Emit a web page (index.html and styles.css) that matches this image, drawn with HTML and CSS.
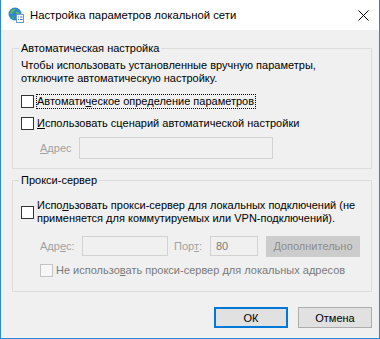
FILE: index.html
```html
<!DOCTYPE html>
<html lang="ru">

<head>
    <meta charset="UTF-8">
    <title>Настройка параметров локальной сети</title>
    <link rel="stylesheet" href="styles.css">
</head>

<body>
    <div class="window">
        <!-- Заголовок окна -->
        <div class="titlebar">
            <svg class="app-icon" viewBox="0 0 16 16" width="16" height="16">
                <circle cx="7" cy="7" r="6.5" fill="#2f86d6" />
                <path d="M2.5 4.5 C4 2 6 1.5 7.5 2.5 C7 4 5.5 4 5 5.5 C4.5 7 3 7.5 2.2 6.5 Z" fill="#5cb85c" />
                <path d="M8 5 C9.5 4.5 11.5 5.5 12.5 7 C12 8.5 10 9 9 8 C8.5 7 7.5 6 8 5 Z" fill="#5cb85c" />
                <path d="M4 9.5 C5 9 6.5 10 6 11.5 C5.5 12.5 4.5 12 4 11 Z" fill="#4caf50" />
                <rect x="8.5" y="7.5" width="7" height="8" fill="#fff" stroke="#6c98c8" />
                <rect x="10" y="9.5" width="1" height="1" fill="#3a78c0" />
                <rect x="12" y="9.5" width="2.5" height="1" fill="#3a78c0" />
                <rect x="10" y="12" width="1" height="1" fill="#3a78c0" />
                <rect x="12" y="12" width="2.5" height="1" fill="#3a78c0" />
            </svg>
            <span class="title">Настройка параметров локальной сети</span>
            <svg class="close" viewBox="0 0 11 11" width="11" height="11">
                <path d="M0.5 0.5 L10.5 10.5 M10.5 0.5 L0.5 10.5" stroke="#000" stroke-width="1" fill="none" />
            </svg>
        </div>

        <div class="content">
            <!-- Автоматическая настройка -->
            <fieldset class="group group-auto">
                <legend>Автоматическая настройка</legend>
                <p class="note">Чтобы использовать установленные вручную параметры,<br>отключите автоматическую настройку.</p>
                <div class="check-row">
                    <span class="box"></span>
                    <span class="label focused">Автомати<u>ч</u>еское определение параметров</span>
                </div>
                <div class="check-row row-gap">
                    <span class="box"></span>
                    <span class="label"><u>И</u>спользовать сценарий автоматической настройки</span>
                </div>
                <div class="addr-row">
                    <span class="dim addr-label"><u>А</u>дрес</span>
                    <span class="field field-script"></span>
                </div>
            </fieldset>

            <!-- Прокси-сервер -->
            <fieldset class="group group-proxy">
                <legend>Прокси-сервер</legend>
                <div class="check-row multi">
                    <span class="box"></span>
                    <span class="label">Испо<u>л</u>ьзовать прокси-сервер для локальных подключений (не<br>применяется для коммутируемых или VPN-подключений).</span>
                </div>
                <div class="proxy-row">
                    <span class="dim proxy-label">Адр<u>е</u>с:</span>
                    <span class="field field-addr"></span>
                    <span class="dim port-label">Пор<u>т</u>:</span>
                    <span class="field field-port">80</span>
                    <span class="btn-disabled"><u>Д</u>ополнительно</span>
                </div>
                <div class="check-row sub-row">
                    <span class="box box-disabled"></span>
                    <span class="label label-disabled">Не использо<u>в</u>ать прокси-сервер для локальных адресов</span>
                </div>
            </fieldset>

            <div class="footer">
                <button class="btn btn-default">ОК</button>
                <button class="btn">Отмена</button>
            </div>
        </div>
    </div>
</body>

</html>
```

FILE: styles.css
```css
body {
    margin: 0;
    font-family: "Liberation Sans", Arial, sans-serif;
    font-size: 11px;
    line-height: 13px;
    color: #000;
}

.window {
    width: 380px;
    height: 339px;
    box-sizing: border-box;
    border: 1px solid #2b88d8;
    border-top: none;
    background-color: #f0f0f0;
    display: flex;
    flex-direction: column;
    overflow: hidden;
}

/* Заголовок */
.titlebar {
    height: 30px;
    flex-shrink: 0;
    background-color: #fff;
    display: flex;
    align-items: center;
    padding-left: 7px;
}

    .titlebar .app-icon {
        margin-right: 6px;
    }

    .titlebar .title {
        flex: 1;
        font-size: 11.3px;
        margin-top: 1px;
    }

    .titlebar .close {
        margin-right: 10px;
    }

.content {
    padding: 12px 7px 0 11px;
}

/* Группы */
.group {
    margin: 0;
    min-width: 0;
    border: 1px solid #dcdcdc;
    padding: 4px 8px 9px 8px;
}

    .group legend {
        padding: 0 2px;
        margin-left: -2px;
    }

.group-proxy {
    margin-top: 5px;
    padding-top: 11px;
    padding-bottom: 13px;
}

.note {
    margin: 0 0 9px 0;
    white-space: nowrap;
}

.check-row {
    display: flex;
    align-items: center;
    min-height: 15px;
}

.row-gap {
    margin-top: 7px;
}

.box {
    width: 13px;
    height: 13px;
    flex-shrink: 0;
    box-sizing: border-box;
    border: 1px solid #333;
    background-color: #fff;
    margin-right: 2px;
}

.box-disabled {
    border-color: #c4c4c4;
    background-color: #f7f7f7;
}

.label {
    flex-shrink: 0;
    white-space: nowrap;
    border: 1px dotted transparent;
    padding-right: 1px;
}

    .label.focused {
        border-color: #000;
    }

.label-disabled {
    color: #7a7a7a;
}

.dim {
    flex-shrink: 0;
    white-space: nowrap;
    color: #a2a2a2;
}

.field {
    flex-shrink: 0;
    box-sizing: border-box;
    border: 1px solid #d2d2d2;
    background-color: #f0f0f0;
    color: #7a7a7a;
}

/* Адрес сценария */
.addr-row {
    display: flex;
    align-items: center;
    margin-top: 6px;
    padding-left: 19px;
}

.addr-label {
    width: 39px;
}

.field-script {
    width: 194px;
    height: 22px;
}

/* Прокси */
.proxy-row {
    display: flex;
    align-items: center;
    margin-top: 9px;
    padding-left: 19px;
    height: 22px;
}

.proxy-label {
    width: 42px;
}

.field-addr {
    width: 86px;
    height: 20px;
}

.port-label {
    width: 36px;
    margin-left: 6px;
}

.field-port {
    width: 48px;
    height: 20px;
    padding: 3px 0 0 5px;
}

.btn-disabled {
    flex-shrink: 0;
    white-space: nowrap;
    width: 94px;
    height: 21px;
    margin-left: 8px;
    box-sizing: border-box;
    background-color: #cccccc;
    color: #8c8c8c;
    display: flex;
    align-items: center;
    justify-content: center;
}

.sub-row {
    margin-top: 6px;
    padding-left: 19px;
}

/* Кнопки */
.footer {
    display: flex;
    justify-content: flex-end;
    gap: 10px;
    margin-top: 15px;
}

.btn {
    width: 74px;
    height: 21px;
    box-sizing: border-box;
    border: 1px solid #adadad;
    background-color: #e1e1e1;
    font-family: inherit;
    font-size: 11px;
    color: #000;
    padding: 0;
}

.btn-default {
    border: 2px solid #0078d7;
}
```
